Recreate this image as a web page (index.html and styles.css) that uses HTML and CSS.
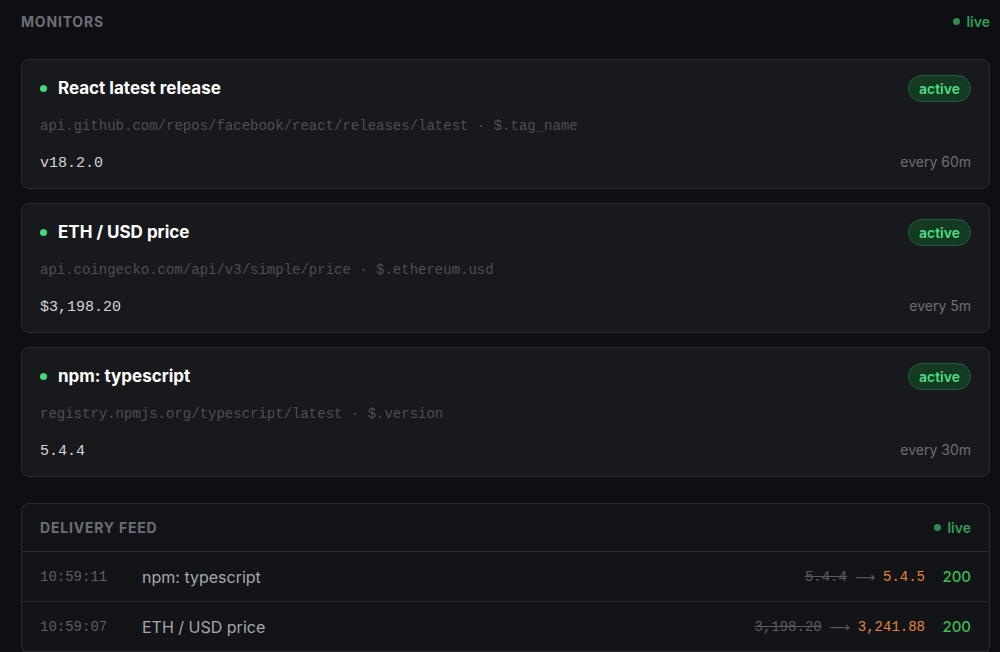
FILE: index.html
```html
<html>

  <head>

    <title>
      Monitors
    </title>

    <link rel="stylesheet" href="styles.css">

  </head>

  <body>

    <div class = "sectionHead">
      <span class = "sectionTitle">MONITORS</span>
      <span class = "live"><span class = "liveDot"></span>live</span>
    </div>

    <div class = "monitors">

      <div class = "card">
        <div class = "cardTop">
          <div class = "name"><span class = "dot"></span>React latest release</div>
          <span class = "badge">active</span>
        </div>
        <div class = "source">api.github.com/repos/facebook/react/releases/latest · $.tag_name</div>
        <div class = "cardBottom">
          <span class = "value">v18.2.0</span>
          <span class = "interval">every 60m</span>
        </div>
      </div>

      <div class = "card">
        <div class = "cardTop">
          <div class = "name"><span class = "dot"></span>ETH / USD price</div>
          <span class = "badge">active</span>
        </div>
        <div class = "source">api.coingecko.com/api/v3/simple/price · $.ethereum.usd</div>
        <div class = "cardBottom">
          <span class = "value">$3,198.20</span>
          <span class = "interval">every 5m</span>
        </div>
      </div>

      <div class = "card">
        <div class = "cardTop">
          <div class = "name"><span class = "dot"></span>npm: typescript</div>
          <span class = "badge">active</span>
        </div>
        <div class = "source">registry.npmjs.org/typescript/latest · $.version</div>
        <div class = "cardBottom">
          <span class = "value">5.4.4</span>
          <span class = "interval">every 30m</span>
        </div>
      </div>

    </div>

    <div class = "feed">

      <div class = "feedHead">
        <span class = "sectionTitle">DELIVERY FEED</span>
        <span class = "live"><span class = "liveDot"></span>live</span>
      </div>

      <div class = "feedRow">
        <span class = "time">10:59:11</span>
        <span class = "feedName">npm: typescript</span>
        <span class = "change"><s class = "old">5.4.4</s><span class = "arrow">&#10230;</span><span class = "new">5.4.5</span></span>
        <span class = "status">200</span>
      </div>

      <div class = "feedRow">
        <span class = "time">10:59:07</span>
        <span class = "feedName">ETH / USD price</span>
        <span class = "change"><s class = "old">3,198.20</s><span class = "arrow">&#10230;</span><span class = "new">3,241.88</span></span>
        <span class = "status">200</span>
      </div>

    </div>

  </body>

</html>
```

FILE: styles.css
```css
body
{
  margin: 0;
  padding: 0 10px 0 21px;
  background: #0e0f13;
  font-family: Inter, "Noto Sans", sans-serif;
  color: #e6e6e6;
  overflow: hidden;
}

.sectionHead
{
  display: flex;
  justify-content: space-between;
  align-items: center;
  height: 43px;
}

.sectionTitle
{
  font-size: 14px;
  font-weight: 700;
  letter-spacing: 0.8px;
  color: #6b6e75;
}

.live
{
  display: flex;
  align-items: center;
  gap: 6px;
  font-size: 14px;
  font-weight: 600;
  color: #2f9e55;
}

.liveDot
{
  width: 7px;
  height: 7px;
  border-radius: 50%;
  background: #2f8a4f;
}

.monitors
{
  display: flex;
  flex-direction: column;
  gap: 14px;
  margin-top: 16px;
}

.card
{
  background: #18191d;
  border: 1px solid #2a2c31;
  border-radius: 8px;
  padding: 14px 18px 0 18px;
  height: 130px;
  box-sizing: border-box;
}

.cardTop
{
  display: flex;
  justify-content: space-between;
  align-items: center;
  height: 28px;
}

.name
{
  display: flex;
  align-items: center;
  gap: 11px;
  font-size: 17px;
  font-weight: 700;
  color: #ffffff;
}

.dot
{
  width: 7px;
  height: 7px;
  border-radius: 50%;
  background: #3ddc74;
}

.badge
{
  font-size: 14px;
  font-weight: 600;
  color: #4ade80;
  background: #143a24;
  border: 1px solid #1f6138;
  border-radius: 14px;
  padding: 4px 10px;
}

.source
{
  margin-top: 16px;
  font-family: "Liberation Mono", monospace;
  font-size: 14px;
  color: #4c4f55;
}

.cardBottom
{
  display: flex;
  justify-content: space-between;
  align-items: baseline;
  margin-top: 19px;
}

.value
{
  font-family: "Liberation Mono", monospace;
  font-size: 15px;
  color: #d4d4d4;
}

.interval
{
  font-size: 14px;
  color: #6b6e75;
}

.feed
{
  margin-top: 26px;
  background: #131418;
  border: 1px solid #2a2c31;
  border-radius: 8px;
}

.feedHead
{
  display: flex;
  justify-content: space-between;
  align-items: center;
  height: 47px;
  padding: 0 18px;
  border-bottom: 1px solid #2a2c31;
}

.feedRow
{
  display: flex;
  align-items: center;
  height: 49px;
  padding: 0 18px;
  border-bottom: 1px solid #25272c;
}

.time
{
  width: 102px;
  font-family: "Liberation Mono", monospace;
  font-size: 14px;
  color: #5c5f65;
}

.feedName
{
  flex: 1;
  font-size: 16px;
  color: #a4a7ad;
}

.change
{
  display: flex;
  align-items: center;
  font-family: "Liberation Mono", monospace;
  font-size: 14px;
}

.old
{
  color: #585b61;
}

.arrow
{
  font-family: "DejaVu Sans", sans-serif;
  color: #55585e;
  margin: 0 8px;
}

.new
{
  color: #e8833a;
}

.status
{
  width: 46px;
  text-align: right;
  font-size: 15px;
  font-weight: 500;
  color: #3fb950;
}
```
